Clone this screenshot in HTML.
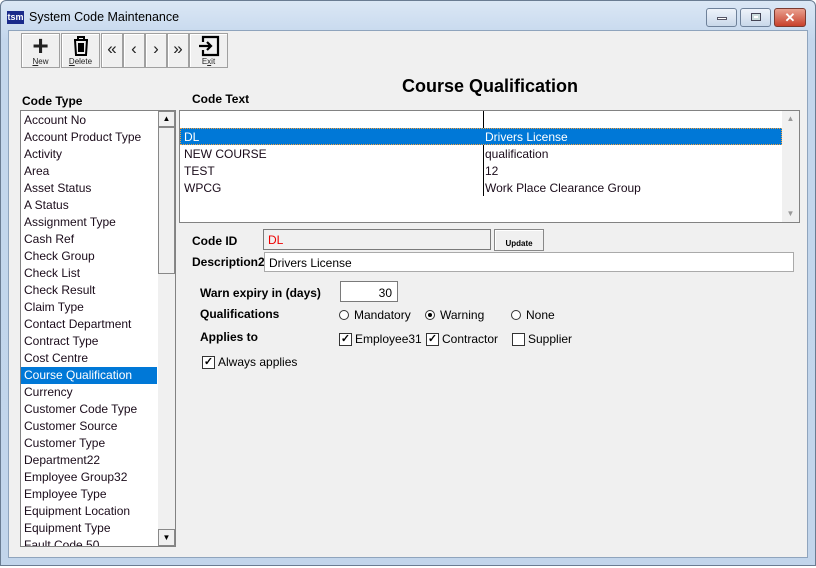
<html><head><style>
*{box-sizing:border-box}
body{margin:0;width:816px;height:568px;background:#fff;font-family:"Liberation Sans",sans-serif;font-size:12px;overflow:hidden;position:relative}
.a{position:absolute}
.frame{left:0;top:0;width:816px;height:566px;background:linear-gradient(#dbe7f5,#c3d6ec 40px,#c2d5eb);border:1px solid #6a7c92;border-radius:6px 6px 0 0}
.client{left:8px;top:30px;width:800px;height:528px;background:#f0f0f0;border:1px solid #8fa4bd}
.tb{top:33px;height:35px;background:#f0f0f0;border:1px solid #a0a0a0;box-shadow:inset 1px 1px #fff;text-align:center;font-size:8px;color:#222}
.b{font-weight:bold;color:#000}
.li{position:absolute;left:3px;height:17px;line-height:19px;font-size:12px;color:#1a0b1a}
.wbtn{top:8px;height:19px;border:1px solid #6e819a;border-radius:3px;background:linear-gradient(#eef3fa,#c9d8ea)}
.ck{display:inline-block;width:13px;height:13px;border:1px solid #333;background:#fff;font-size:11px;line-height:11px;text-align:center;font-weight:bold;margin-right:3px}
.rd{display:inline-block;width:10px;height:10px;border:1px solid #333;border-radius:50%;background:#fff;position:relative;margin-right:5px}
.fl{display:flex;align-items:center;height:16px}
</style></head><body>
<div class="a frame"></div>
<div class="a" style="left:7px;top:11px;width:17px;height:13px;background:#1a2a8a;color:#fff;font-size:9px;line-height:13px;text-align:center;font-weight:bold">tsm</div>
<div class="a" style="left:29px;top:10px;font-size:12.5px;color:#000">System Code Maintenance</div>
<div class="a wbtn" style="left:706px;width:31px"><div class="a" style="left:10px;top:8px;width:10px;height:3px;background:#fff;border:1px solid #556"></div></div>
<div class="a wbtn" style="left:740px;width:31px"><div class="a" style="left:10px;top:4px;width:10px;height:8px;border:1px solid #445;background:#fff;box-shadow:inset 0 0 0 2px #cdd"></div></div>
<div class="a wbtn" style="left:774px;width:32px;background:linear-gradient(#e9a08f,#c8412c);border-color:#7a3a30;color:#fff;font-weight:bold;font-size:13px;text-align:center;line-height:17px">✕</div>
<div class="a client"></div>
<div class="a tb" style="left:21px;width:39px"><div style="font-size:28px;line-height:22px;font-weight:bold;margin-top:1px">+</div><u>N</u>ew</div>
<div class="a tb" style="left:61px;width:39px"><svg width="20" height="22" viewBox="0 0 20 22" style="display:block;margin:1px auto 0"><path d="M3 5h14M7 5V2h6v3M4 5l1 15h10l1-15M8 8v9M10 8v9M12 8v9" stroke="#000" stroke-width="2" fill="none"/></svg><u>D</u>elete</div>
<div class="a tb" style="left:101px;width:22px;font-size:17px;line-height:30px">«</div>
<div class="a tb" style="left:123px;width:22px;font-size:17px;line-height:30px">‹</div>
<div class="a tb" style="left:145px;width:22px;font-size:17px;line-height:30px">›</div>
<div class="a tb" style="left:167px;width:22px;font-size:17px;line-height:30px">»</div>
<div class="a tb" style="left:189px;width:39px"><svg width="22" height="22" viewBox="0 0 22 22" style="display:block;margin:1px auto 0"><path d="M5 7V2h15v18H5v-5M1 11h12M9 7l4 4-4 4" stroke="#000" stroke-width="2.2" fill="none"/></svg>E<u>x</u>it</div>
<div class="a b" style="left:22px;top:94px;font-size:12px">Code Type</div>
<div class="a b" style="left:192px;top:92px;font-size:12px">Code Text</div>
<div class="a b" style="left:402px;top:76px;font-size:18px">Course Qualification</div>
<!-- list -->
<div class="a" style="left:20px;top:110px;width:156px;height:437px;background:#fff;border:1px solid #828282;overflow:hidden">
<div class="li" style="top:0">Account No</div><div class="li" style="top:17px">Account Product Type</div><div class="li" style="top:34px">Activity</div><div class="li" style="top:51px">Area</div><div class="li" style="top:68px">Asset Status</div><div class="li" style="top:85px">A Status</div><div class="li" style="top:102px">Assignment Type</div><div class="li" style="top:119px">Cash Ref</div><div class="li" style="top:136px">Check Group</div><div class="li" style="top:153px">Check List</div><div class="li" style="top:170px">Check Result</div><div class="li" style="top:187px">Claim Type</div><div class="li" style="top:204px">Contact Department</div><div class="li" style="top:221px">Contract Type</div><div class="li" style="top:238px">Cost Centre</div>
<div class="li" style="top:256px;left:0;width:136px;background:#0078d7;color:#fff;padding-left:3px;line-height:17px">Course Qualification</div>
<div class="li" style="top:272px">Currency</div><div class="li" style="top:289px">Customer Code Type</div><div class="li" style="top:306px">Customer Source</div><div class="li" style="top:323px">Customer Type</div><div class="li" style="top:340px">Department22</div><div class="li" style="top:357px">Employee Group32</div><div class="li" style="top:374px">Employee Type</div><div class="li" style="top:391px">Equipment Location</div><div class="li" style="top:408px">Equipment Type</div><div class="li" style="top:425px">Fault Code 50</div>
<div class="a" style="left:137px;top:0;width:17px;height:435px;background:#f0f0f0"></div>
<div class="a" style="left:137px;top:0;width:17px;height:16px;border:1px solid #888;background:#f0f0f0;font-size:8px;text-align:center;line-height:14px">▲</div>
<div class="a" style="left:137px;top:16px;width:17px;height:147px;border:1px solid #888;background:#f0f0f0"></div>
<div class="a" style="left:137px;top:418px;width:17px;height:17px;border:1px solid #888;background:#f0f0f0;font-size:8px;text-align:center;line-height:15px">▼</div>
</div>
<!-- grid -->
<div class="a" style="left:179px;top:110px;width:621px;height:113px;background:#fff;border:1px solid #828282">
<div class="a" style="left:303px;top:0;width:1px;height:85px;background:#000"></div>
<div class="a" style="left:0;top:17px;width:602px;height:17px;background:#0078d7;border:1px dotted #f0a040"></div>
<div class="li" style="top:17px;left:4px;color:#fff">DL</div><div class="li" style="top:17px;left:305px;color:#fff">Drivers License</div>
<div class="li" style="top:34px;left:4px">NEW COURSE</div><div class="li" style="top:34px;left:305px">qualification</div>
<div class="li" style="top:51px;left:4px">TEST</div><div class="li" style="top:51px;left:305px">12</div>
<div class="li" style="top:68px;left:4px">WPCG</div><div class="li" style="top:68px;left:305px">Work Place Clearance Group</div>
<div class="a" style="left:602px;top:0;width:17px;height:111px;background:#f0f0f0;font-size:8px;color:#999;text-align:center"><div style="line-height:16px">▲</div><div style="position:absolute;bottom:0;width:17px;line-height:16px">▼</div></div>
</div>
<div class="a b" style="left:192px;top:234px">Code ID</div>
<div class="a" style="left:263px;top:229px;width:228px;height:21px;background:#f0f0f0;border:1px solid #7a7a7a;color:#e00;padding:3px 4px">DL</div>
<div class="a" style="left:494px;top:229px;width:50px;height:22px;border:1px solid #888;background:#f0f0f0;box-shadow:inset 1px 1px #fff;font-size:8px;font-weight:bold;text-align:center;padding-top:9px">Update</div>
<div class="a b" style="left:192px;top:255px">Description2</div>
<div class="a" style="left:264px;top:252px;width:530px;height:20px;background:#fff;border:1px solid #aaa;padding:3px 4px">Drivers License</div>
<div class="a b" style="left:200px;top:286px">Warn expiry in (days)</div>
<div class="a" style="left:340px;top:281px;width:58px;height:21px;background:#fff;border:1px solid #7a7a7a;text-align:right;padding:4px 5px">30</div>
<div class="a b" style="left:200px;top:307px">Qualifications</div>
<div class="a fl" style="left:339px;top:307px"><span class="rd"></span>Mandatory</div>
<div class="a fl" style="left:425px;top:307px"><span class="rd"><span class="a" style="left:2px;top:2px;width:4px;height:4px;border-radius:50%;background:#000"></span></span>Warning</div>
<div class="a fl" style="left:511px;top:307px"><span class="rd"></span>None</div>
<div class="a b" style="left:200px;top:330px">Applies to</div>
<div class="a fl" style="left:339px;top:331px"><span class="ck">✓</span>Employee31</div>
<div class="a fl" style="left:426px;top:331px"><span class="ck">✓</span>Contractor</div>
<div class="a fl" style="left:512px;top:331px"><span class="ck"></span>Supplier</div>
<div class="a fl" style="left:202px;top:354px"><span class="ck">✓</span>Always applies</div>
</body></html>
